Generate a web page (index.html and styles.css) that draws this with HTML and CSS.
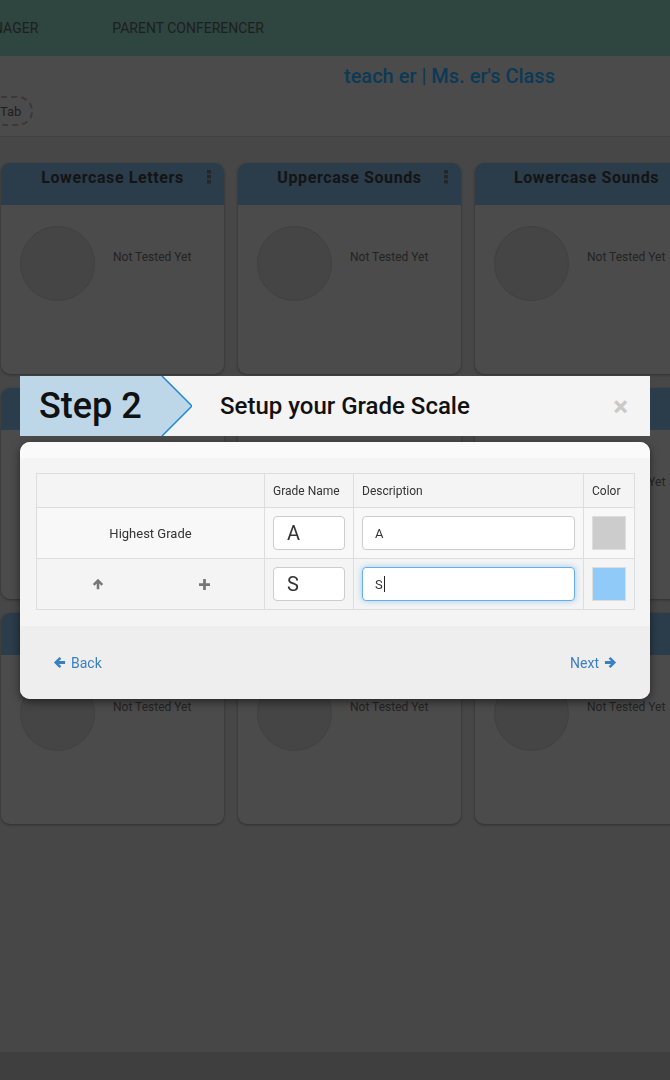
FILE: index.html
```html
<!DOCTYPE html>
<html lang="en">
<head>
    <meta charset="UTF-8">
    <meta name="viewport" content="width=device-width, initial-scale=1.0">
    <title>Grade Scale Setup</title>
    <link rel="stylesheet" href="styles.css">
</head>
<body>
    <header class="topnav">
        <span class="nav-item first">NAGER</span>
        <span class="nav-item">PARENT CONFERENCER</span>
    </header>

    <div class="subheader">
        <div class="class-title">teach er | Ms. er's Class</div>
        <span class="tab-pill">Tab</span>
    </div>

    <main class="cards">
        <div class="card"><div class="card-head"><span class="card-title">Lowercase Letters</span><svg class="kebab" width="4" height="14" viewBox="0 0 4 14"><rect x="0" y="0" width="4" height="3.5"/><rect x="0" y="5" width="4" height="3.5"/><rect x="0" y="10" width="4" height="3.5"/></svg></div><div class="card-body"><span class="circle"></span><span class="status">Not Tested Yet</span></div></div>
        <div class="card"><div class="card-head"><span class="card-title">Uppercase Sounds</span><svg class="kebab" width="4" height="14" viewBox="0 0 4 14"><rect x="0" y="0" width="4" height="3.5"/><rect x="0" y="5" width="4" height="3.5"/><rect x="0" y="10" width="4" height="3.5"/></svg></div><div class="card-body"><span class="circle"></span><span class="status">Not Tested Yet</span></div></div>
        <div class="card"><div class="card-head"><span class="card-title">Lowercase Sounds</span></div><div class="card-body"><span class="circle"></span><span class="status">Not Tested Yet</span></div></div>

        <div class="card"><div class="card-head"></div><div class="card-body"><span class="circle"></span><span class="status">Not Tested Yet</span></div></div>
        <div class="card"><div class="card-head"></div><div class="card-body"><span class="circle"></span><span class="status">Not Tested Yet</span></div></div>
        <div class="card"><div class="card-head"></div><div class="card-body"><span class="circle"></span><span class="status">Not Tested Yet</span></div></div>

        <div class="card"><div class="card-head"></div><div class="card-body"><span class="circle"></span><span class="status">Not Tested Yet</span></div></div>
        <div class="card"><div class="card-head"></div><div class="card-body"><span class="circle"></span><span class="status">Not Tested Yet</span></div></div>
        <div class="card"><div class="card-head"></div><div class="card-body"><span class="circle"></span><span class="status">Not Tested Yet</span></div></div>
    </main>

    <footer class="page-footer"></footer>

    <div class="modal">
        <div class="step-bar">
            <div class="step">
                <svg class="step-shape" width="172" height="60" viewBox="0 0 172 60">
                    <polygon points="0,0 142,0 172,30 142,60 0,60" fill="#bdd6e8"/>
                    <polyline points="142,0 172,30 142,60" fill="none" stroke="#1b88d3" stroke-width="1.5"/>
                </svg>
                <span class="step-label">Step 2</span>
            </div>
            <div class="step-title">Setup your Grade Scale</div>
            <span class="close">&times;</span>
        </div>

        <div class="modal-content">
            <div class="modal-top"></div>
            <div class="modal-body">
                <table class="grades">
                    <thead>
                        <tr>
                            <th class="col-ctrl"></th>
                            <th class="col-name">Grade Name</th>
                            <th class="col-desc">Description</th>
                            <th class="col-color">Color</th>
                        </tr>
                    </thead>
                    <tbody>
                        <tr class="odd">
                            <td class="ctrl">Highest Grade</td>
                            <td><div class="field big">A</div></td>
                            <td><div class="field">A</div></td>
                            <td><div class="swatch grey"></div></td>
                        </tr>
                        <tr>
                            <td class="ctrl">
                                <div class="ctrl-icons">
                                    <svg width="12" height="12" viewBox="0 0 14 14"><path d="M7 1 L1 7 L3 9 L5.5 6.4 V13 H8.5 V6.4 L11 9 L13 7 Z" fill="#777"/></svg>
                                    <svg width="11" height="11" viewBox="0 0 12 12"><path d="M4.5 0 H7.5 V4.5 H12 V7.5 H7.5 V12 H4.5 V7.5 H0 V4.5 H4.5 Z" fill="#777"/></svg>
                                </div>
                            </td>
                            <td><div class="field big">S</div></td>
                            <td><div class="field focus">S<span class="caret"></span></div></td>
                            <td><div class="swatch blue"></div></td>
                        </tr>
                    </tbody>
                </table>
            </div>
            <div class="modal-footer">
                <a class="nav-link">
                    <svg width="13" height="13" viewBox="0 0 14 14"><path d="M7 1 L1 7 L7 13 L9 11 L6.4 8.5 H13 V5.5 H6.4 L9 3 Z" fill="currentColor"/></svg>
                    Back
                </a>
                <a class="nav-link">
                    Next
                    <svg width="13" height="13" viewBox="0 0 14 14"><path d="M7 1 L13 7 L7 13 L5 11 L7.6 8.5 H1 V5.5 H7.6 L5 3 Z" fill="currentColor"/></svg>
                </a>
            </div>
        </div>
    </div>
</body>
</html>
```

FILE: styles.css
```css
body {
    margin: 0;
    font-family: Roboto, "Liberation Sans", sans-serif;
    background-color: #474747;
    min-height: 1080px;
    display: flex;
    flex-direction: column;
    overflow: hidden;
}
.topnav {
    height: 56px;
    background-color: #2f4540;
    display: flex;
    align-items: center;
    gap: 74px;
    color: #1c1f1e;
    font-size: 14px;
}
.nav-item.first {
    margin-left: -7px;
}
.subheader {
    height: 80px;
    background-color: #4b4b4b;
    border-bottom: 1px solid #414141;
    position: relative;
}
.class-title {
    padding: 8px 0 0 344px;
    font-size: 20px;
    font-weight: 500;
    color: #0b3a57;
}
.tab-pill {
    display: inline-block;
    margin: 8px 0 0 -34px;
    padding: 0 10px 0 32px;
    height: 26px;
    line-height: 27px;
    border: 2px dashed #393939;
    border-radius: 16px;
    font-size: 13px;
    color: #1e1e1e;
}
.cards {
    display: grid;
    grid-template-columns: repeat(3, 223px);
    gap: 14px;
    padding: 26px 0 0 1px;
}
.card {
    height: 211px;
    border-radius: 9px;
    background-color: #4b4b4b;
    box-shadow: 0 1px 3px rgba(0, 0, 0, 0.35);
    overflow: hidden;
}
.card-head {
    height: 42px;
    background-color: #2b3c4a;
    position: relative;
    text-align: center;
}
.card-title {
    display: inline-block;
    padding-top: 5px;
    font-size: 16px;
    font-weight: 700;
    letter-spacing: 0.6px;
    color: #141414;
}
.kebab {
    position: absolute;
    right: 13px;
    top: 7px;
    fill: #262626;
}
.card-body {
    display: flex;
    align-items: flex-start;
    padding: 21px 0 0 19px;
}
.circle {
    width: 73px;
    height: 73px;
    border-radius: 50%;
    background-color: #454545;
    border: 1px solid #414141;
}
.status {
    margin: 24px 0 0 18px;
    font-size: 12px;
    color: #232323;
    white-space: nowrap;
}
.page-footer {
    margin-top: auto;
    height: 28px;
    background-color: #3f3f3f;
}
.modal {
    position: fixed;
    left: 20px;
    top: 376px;
    width: 630px;
}
.step-bar {
    height: 60px;
    background-color: #f4f4f4;
    display: flex;
    align-items: center;
}
.step {
    position: relative;
    width: 172px;
    height: 60px;
    display: flex;
    align-items: center;
}
.step-shape {
    position: absolute;
    left: 0;
    top: 0;
}
.step-label {
    position: relative;
    padding-left: 19px;
    font-size: 36px;
    font-weight: 500;
    color: #111;
}
.step-title {
    margin-left: 28px;
    font-size: 24px;
    font-weight: 500;
    color: #111;
}
.close {
    margin-left: auto;
    margin-right: 22px;
    font-size: 28px;
    font-weight: 700;
    color: #c9c9c9;
}
.modal-content {
    margin-top: 6px;
    border-radius: 10px;
    overflow: hidden;
    background-color: #f4f4f4;
    box-shadow: 0 3px 9px rgba(0, 0, 0, 0.5);
}
.modal-top {
    height: 16px;
    background-color: #fafafa;
}
.modal-body {
    padding: 15px 16px 16px;
}
.grades {
    width: 598px;
    border-collapse: collapse;
    table-layout: fixed;
}
.grades th,
.grades td {
    box-sizing: border-box;
    border: 1px solid #dddddd;
    padding: 0 8px;
}
.grades th {
    height: 34px;
    font-size: 12px;
    font-weight: 400;
    color: #333;
    text-align: left;
}
.grades td {
    height: 51px;
}
.col-ctrl { width: 228px; }
.col-name { width: 89px; }
.col-desc { width: 230px; }
.col-color { width: 51px; }
.grades tr.odd td {
    background-color: #f8f8f8;
}
.ctrl {
    text-align: center;
    font-size: 13px;
    color: #333;
}
.ctrl-icons {
    display: flex;
    justify-content: space-between;
    padding: 0 46px 0 47px;
    align-items: center;
}
.field {
    height: 32px;
    border: 1px solid #cccccc;
    border-radius: 4px;
    background-color: #fff;
    display: flex;
    align-items: center;
    padding-left: 12px;
    font-size: 13px;
    color: #333;
}
.field.big {
    padding-left: 13px;
    font-size: 20px;
}
.field.focus {
    border-color: #66afe9;
    box-shadow: 0 0 6px rgba(102, 175, 233, 0.6);
}
.caret {
    width: 1px;
    height: 16px;
    background-color: #222;
    margin-left: 1px;
}
.swatch {
    width: 32px;
    height: 32px;
    border: 1px solid #dddddd;
}
.swatch.grey { background-color: #cccccc; }
.swatch.blue { background-color: #90caf9; }
.modal-footer {
    height: 73px;
    background-color: #eeeeee;
    display: flex;
    justify-content: space-between;
    align-items: center;
    padding: 0 33px;
}
.nav-link {
    display: flex;
    align-items: center;
    gap: 5px;
    font-size: 14px;
    color: #3a7fc1;
    cursor: pointer;
}
```
